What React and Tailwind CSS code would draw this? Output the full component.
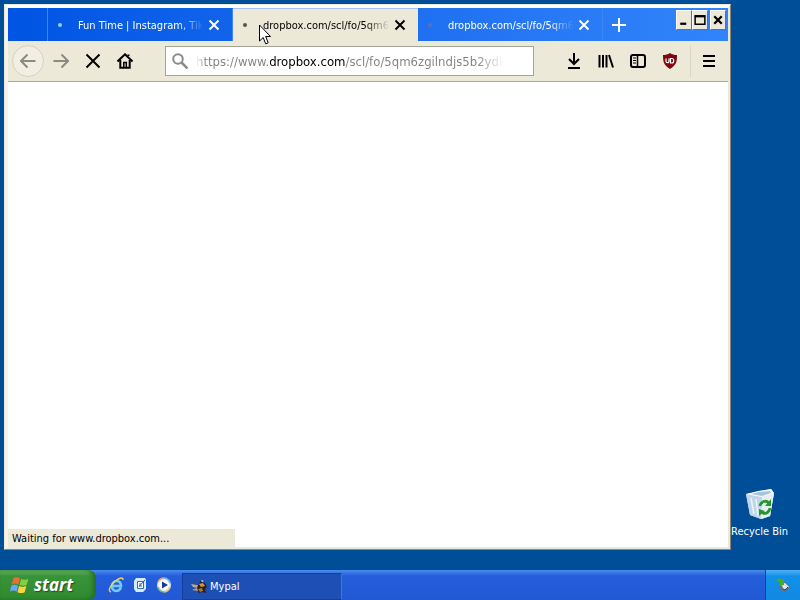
import React, { useState } from "react";

const TABS = [
  { id: 1, title: "Fun Time | Instagram, Tik", dot: "bg-[#8fd0ff]" },
  { id: 2, title: "dropbox.com/scl/fo/5qm6", dot: "bg-[#555]" },
  { id: 3, title: "dropbox.com/scl/fo/5qm6", dot: "bg-[#5a6fc0]" },
];

const PAGE_URL = "https://www.dropbox.com/scl/fo/5qm6zgilndjs5b2ydk";

function Icon({ children, className = "h-4 w-4", stroke = 2 }) {
  return (
    <svg
      viewBox="0 0 16 16"
      className={className}
      fill="none"
      stroke="currentColor"
      strokeWidth={stroke}
      aria-hidden="true"
    >
      {children}
    </svg>
  );
}

function ToolButton({ label, disabled, children }) {
  return (
    <button
      aria-label={label}
      disabled={disabled}
      className="flex h-8 w-8 shrink-0 items-center justify-center text-black disabled:text-[#8b8b83]"
    >
      {children}
    </button>
  );
}

function Tab({ tab, active, onSelect }) {
  return (
    <div
      className={`flex h-full w-[185px] shrink-0 items-center border-t pr-2 pl-2.5 ${
        active
          ? "border-t-[#aac4ee] bg-[#ece9d8] text-black"
          : "border-r border-t-transparent border-r-[#3f86f5] text-white"
      }`}
    >
      <span className={`mr-4 h-1 w-1 shrink-0 rounded-full ${tab.dot}`} />
      <button
        onClick={onSelect}
        className="min-w-0 flex-1 pt-0.5 text-left whitespace-nowrap [mask-image:linear-gradient(to_right,black_80%,transparent)]"
      >
        {tab.title}
      </button>
      <button
        aria-label="Close tab"
        className="flex h-5 w-5 shrink-0 items-center justify-center"
      >
        <Icon>
          <path d="M3.500 3.500l9 9M12.500 3.500l-9 9" />
        </Icon>
      </button>
    </div>
  );
}

function CaptionButton({ label, children }) {
  return (
    <button
      aria-label={label}
      className="flex h-5 w-4 items-center justify-center border border-t-white border-r-[#716f64] border-b-[#716f64] border-l-white bg-[#ece9d8] text-black"
    >
      {children}
    </button>
  );
}

function TitleBar() {
  const [current, setCurrent] = useState(2);
  return (
    <div className="flex h-[33px] bg-linear-to-r from-[#0054e3] to-[#3284fb] text-[11px]">
      <div className="w-10 shrink-0 border-r border-[#3f86f5]" />
      {TABS.map((tab) => (
        <Tab
          key={tab.id}
          tab={tab}
          active={tab.id === current}
          onSelect={() => setCurrent(tab.id)}
        />
      ))}
      <button
        aria-label="New tab"
        className="flex w-8 shrink-0 items-center justify-center text-white"
      >
        <Icon>
          <path d="M8 1v14M1 8h14" />
        </Icon>
      </button>
      <div className="ml-auto flex pt-0.5 pr-0.5">
        <CaptionButton label="Minimize">
          <Icon className="h-3 w-3 shrink-0">
            <path d="M3 13h8" strokeWidth="3" />
          </Icon>
        </CaptionButton>
        <CaptionButton label="Maximize">
          <Icon className="h-3 w-3 shrink-0">
            <path d="M1.500 2.500h13v11h-13z" />
            <path d="M1 3h14" strokeWidth="3" />
          </Icon>
        </CaptionButton>
        <div className="w-0.5" />
        <CaptionButton label="Close">
          <Icon className="h-3 w-3 shrink-0" stroke={3}>
            <path d="M3 3l10 10M13 3L3 13" />
          </Icon>
        </CaptionButton>
      </div>
    </div>
  );
}

function ToolBar() {
  const [url, setUrl] = useState(PAGE_URL);
  return (
    <div className="flex h-[41px] items-center border-b border-[#aaa99b] bg-[#ece9d8] pr-[3px] pl-1">
      <button
        aria-label="Back"
        disabled
        className="mr-px flex h-8 w-8 shrink-0 items-center justify-center rounded-full border border-[#d5d2c2] bg-[#f1efe3] text-[#8b8b83]"
      >
        <Icon>
          <path d="M15.500 8H1M7.500 1.500L1 8l6.500 6.500" />
        </Icon>
      </button>
      <ToolButton label="Forward" disabled>
        <Icon>
          <path d="M.5 8H15M8.500 1.500L15 8l-6.500 6.500" />
        </Icon>
      </ToolButton>
      <ToolButton label="Stop">
        <Icon>
          <path d="M1.500 1.500l13 13M14.500 1.500l-13 13" />
        </Icon>
      </ToolButton>
      <ToolButton label="Home">
        <Icon>
          <path d="M.5 8.500L8 1.300l7.500 7.200" />
          <path d="M3.300 7v7.700h9.400V7" />
          <path d="M11.500 3V1.500" />
          <path d="M6.800 15V9.500h2.500V15" strokeWidth="1.500" />
        </Icon>
      </ToolButton>
      <label className="ml-6 flex h-[30px] min-w-0 flex-1 items-center border border-[#a5a498] bg-white pl-1.5 text-[#8b8b8b]">
        <Icon className="mr-2 h-4 w-4 shrink-0">
          <circle cx="6" cy="6" r="4.800" />
          <path d="M9.500 9.500l6 6" strokeWidth="2.500" />
        </Icon>
        <input
          type="text"
          aria-label="Address"
          value={url}
          onChange={(e) => setUrl(e.target.value)}
          className="mr-7 min-w-0 flex-1 bg-[linear-gradient(to_right,transparent,#808080_10px,#808080_74px,black_74px,black_149px,#808080_149px,#808080_280px,transparent_308px)] bg-clip-text pt-0.5 text-[13px] text-transparent caret-black outline-none"
        />
      </label>
      <div className="ml-6 flex items-center">
        <ToolButton label="Downloads">
          <Icon>
            <path d="M8 0v11M3 6l5 5 5-5M2 15h12" />
          </Icon>
        </ToolButton>
        <ToolButton label="Library">
          <Icon>
            <path d="M1.500 2v12.500M5 2v12.500M8.500 2v12.500M11 2l4 12.500" />
          </Icon>
        </ToolButton>
        <ToolButton label="Sidebars">
          <Icon>
            <rect x="1" y="2" width="14" height="12" rx="2" />
            <path d="M7.500 2v12" strokeWidth="1.500" />
            <path d="M3 5h3M3 7.500h3M3 10h3" strokeWidth="1" />
          </Icon>
        </ToolButton>
        <ToolButton label="uBlock Origin">
          <svg viewBox="0 0 16 16" className="h-4 w-4" aria-hidden="true">
            <path
              d="M8 0c2 1.500 4.500 2 7 2 0 6.500-.5 10-7 14C1.500 12 1 8.500 1 2c2.500 0 5-.5 7-2z"
              fill="#800610"
            />
            <path
              d="M4 5.500v2.700a1.500 1.500 0 0 0 3 0V5.500M8.500 5v5h1.200a2 2 0 0 0 2-2V7a2 2 0 0 0-2-1.500H8.500"
              fill="none"
              stroke="white"
              strokeWidth="1.200"
            />
          </svg>
        </ToolButton>
      </div>
      <div className="mr-0.5 ml-1 h-8 w-px bg-[#d9d6c7]" />
      <ToolButton label="Menu">
        <Icon className="h-4 w-4">
          <path d="M2 3h12M2 8h12M2 13h12" />
        </Icon>
      </ToolButton>
    </div>
  );
}

function BrowserWindow() {
  return (
    <main className="flex min-w-0 flex-1 flex-col border border-t-[#ece9d8] border-r-[#8a887c] border-b-[#8a887c] border-l-[#ece9d8] bg-[#ece9d8]">
      <div className="flex flex-1 flex-col border-2 border-t-3 border-l-3 border-t-white border-r-[#ece9d8] border-b-[#ece9d8] border-l-[#f6f4ea]">
        <TitleBar />
        <ToolBar />
        <div className="flex flex-1 items-end bg-white">
          <p className="h-[18px] w-[227px] bg-[#ece9d8] pt-px pl-1 text-[11px] leading-[18px] text-black">
            Waiting for www.dropbox.com...
          </p>
        </div>
      </div>
    </main>
  );
}

function RecycleBin() {
  return (
    <button className="flex flex-col items-center text-[11px] leading-4 whitespace-nowrap text-white">
      <svg viewBox="0 0 32 32" className="mb-1 h-8 w-8" aria-hidden="true">
        <path d="M2 6l12-2 13-3 3 4-4 23-9 3-11-4z" fill="#d7e7f3" />
        <path d="M2 6l16 3 12-4-4 23-9 3-11-4z" fill="#bfd5ea" />
        <path d="M18 9l12-4-4 23-9 3z" fill="#e6eff5" />
        <path d="M2 6l12-3 13-2 3 4-12 4z" fill="#f6fbfd" />
        <path d="M7 6l8-2 11-1 1 2-9 3z" fill="#a9c4d8" />
        <path d="M7 10l3 16M12 11l2 17" stroke="#edf5fb" strokeWidth="1.500" />
        <g fill="none" stroke="#269829" strokeWidth="2.800">
          <path d="M16 18c1-5 6-6 9-3M26 20c-1 5-5 7-9 4" />
        </g>
        <path d="M27 11v7h-6zM15 28v-7l6 2z" fill="#269829" />
      </svg>
      Recycle Bin
    </button>
  );
}

function WindowsFlag() {
  return (
    <svg viewBox="0 0 18 16" className="h-5 w-5" aria-hidden="true">
      <path d="M3 2q3-2 6 0L7.500 7.500q-3-1.500-6 0z" fill="#ef6b3a" />
      <path d="M10 2.500q3 1.500 6.500 0L15 8q-3 1.500-6.500 0z" fill="#83cf3c" />
      <path d="M1.200 8.500q3-1.500 6 0L6 14q-3-2-6 0z" fill="#6ba5ff" />
      <path d="M8.200 9q3 1.500 6.500 0l-1.500 5.500q-3 1.500-6.500 0z" fill="#ffd43b" />
    </svg>
  );
}

function QuickLaunch() {
  return (
    <div className="ml-3 flex items-center gap-2">
      <button aria-label="Internet Explorer">
        <svg viewBox="0 0 16 16" className="h-4 w-4" fill="none" aria-hidden="true">
          <path
            d="M13 10.500c-1 2.300-2.600 3.500-4.800 3.500C5.500 14 4 12 4 9.300 4 6.300 6 4 8.700 4c2.800 0 4.300 2 4.300 5H5"
            stroke="#72c9fb"
            strokeWidth="2.600"
          />
          <path
            d="M3 15C-1 14 3 7 8 3.500 12 .5 15.500 0 15 3"
            stroke="#f0d35c"
            strokeWidth="1.400"
          />
        </svg>
      </button>
      <button aria-label="Show Desktop">
        <svg viewBox="0 0 16 16" className="h-4 w-4" aria-hidden="true">
          <path d="M4 1h9l1 2v9l-3 3H4l-2-3V4z" fill="#d5eafb" />
          <path d="M5.500 4.500h6v7h-6z" fill="white" stroke="#316bb5" />
          <path d="M7 9.500l6-6.500M7 7h2M7 9h3" fill="none" stroke="#245a9c" />
        </svg>
      </button>
      <button aria-label="Windows Media Player">
        <svg viewBox="0 0 16 16" className="h-4 w-4" aria-hidden="true">
          <circle cx="8" cy="8" r="7" fill="#dce6f5" />
          <path d="M2 5a7 7 0 0 1 6-4" stroke="#ef9b78" strokeWidth="1.500" fill="none" />
          <path d="M8 1a7 7 0 0 1 6 5" stroke="#7bb6e5" strokeWidth="1.500" fill="none" />
          <path d="M14 10a7 7 0 0 1-6 5" stroke="#e9bf75" strokeWidth="1.500" fill="none" />
          <path d="M8 15a7 7 0 0 1-6-5" stroke="#85b583" strokeWidth="1.500" fill="none" />
          <circle cx="8" cy="8" r="5" fill="white" />
          <path d="M6 4.500L12 8l-6 3.500z" fill="#173b9c" />
        </svg>
      </button>
    </div>
  );
}

function TaskBar() {
  return (
    <footer className="flex h-[30px] bg-linear-to-b from-[#4a8cf0] via-[#245edb] via-20% to-[#2258d3] text-[11px] text-white">
      <button className="flex w-24 shrink-0 items-center rounded-r-lg bg-linear-to-b from-[#6cba6a] via-[#399338] via-20% to-[#2f8a2f] pl-2.5 shadow-[inset_-3px_0_4px_#246c24]">
        <WindowsFlag />
        <span className="ml-1 font-['Open_Sans','Liberation_Sans',sans-serif] text-[17px] leading-5 font-bold italic [text-shadow:1px_1px_1px_#1f4f1f]">
          start
        </span>
      </button>
      <QuickLaunch />
      <button className="mt-[3px] ml-2.5 flex h-[27px] w-40 items-center gap-[3px] border border-[#163f9b] border-r-[#3b76e8] bg-[#1d4fb5] pl-2">
        <svg viewBox="0 0 16 16" className="h-4 w-4" aria-hidden="true">
          <path d="M3 5l5 1 1-4 5 2 2 4-2 2 1 4-4-1-3 1-2-3-3 1 2-3z" fill="#2d2118" />
          <path d="M0 5l7 1-1 3-4-1zM1 11l5-2 1 3z" fill="#b9a893" />
          <path d="M8 5l4-1 2 3-4 1z" fill="#d99539" />
          <path d="M7 10l4-1 1 3-3 1z" fill="#b8732b" />
          <path d="M10 1l3 1-2 1z" fill="#e8dfcd" />
        </svg>
        <span className="pt-0.5">Mypal</span>
      </button>
      <div className="ml-auto flex w-[35px] items-center justify-center border-l border-[#1042af] bg-linear-to-b from-[#4bb3f5] via-[#1290e8] via-20% to-[#108ae2]">
        <button aria-label="Safely Remove Hardware">
          <svg viewBox="0 0 16 16" className="h-4 w-4" aria-hidden="true">
            <path d="M4 7l6-2 5 6-6 4-5-4z" fill="#66727b" />
            <path d="M6 7l4-1 4 4-5 3z" fill="#dce5e8" />
            <path d="M8 12l2 1 3-3" stroke="#30383d" fill="none" />
            <path d="M1 3l4-2 1 2 3-1v6L4 9l1-3z" fill="#43ad2c" />
          </svg>
        </button>
      </div>
    </footer>
  );
}

function Cursor() {
  return (
    <svg
      viewBox="0 0 12 21"
      className="pointer-events-none absolute top-6 left-[259px] h-[21px] w-3"
      aria-hidden="true"
    >
      <path
        d="M.5 1v16l3.700-3.500 2.500 6.300 2.500-1-2.500-6.300H11.500z"
        fill="white"
        stroke="black"
      />
    </svg>
  );
}

function App() {
  return (
    <div className="relative flex h-screen flex-col overflow-hidden bg-[#004e98] font-['DejaVu_Sans_Condensed','DejaVu_Sans',sans-serif]">
      <div className="flex min-h-0 flex-1 pt-1 pb-5 pl-1">
        <BrowserWindow />
        <aside className="flex w-[69px] shrink-0 flex-col items-start justify-end pb-2.5">
          <RecycleBin />
        </aside>
      </div>
      <TaskBar />
      <Cursor />
    </div>
  );
}

export default App;
